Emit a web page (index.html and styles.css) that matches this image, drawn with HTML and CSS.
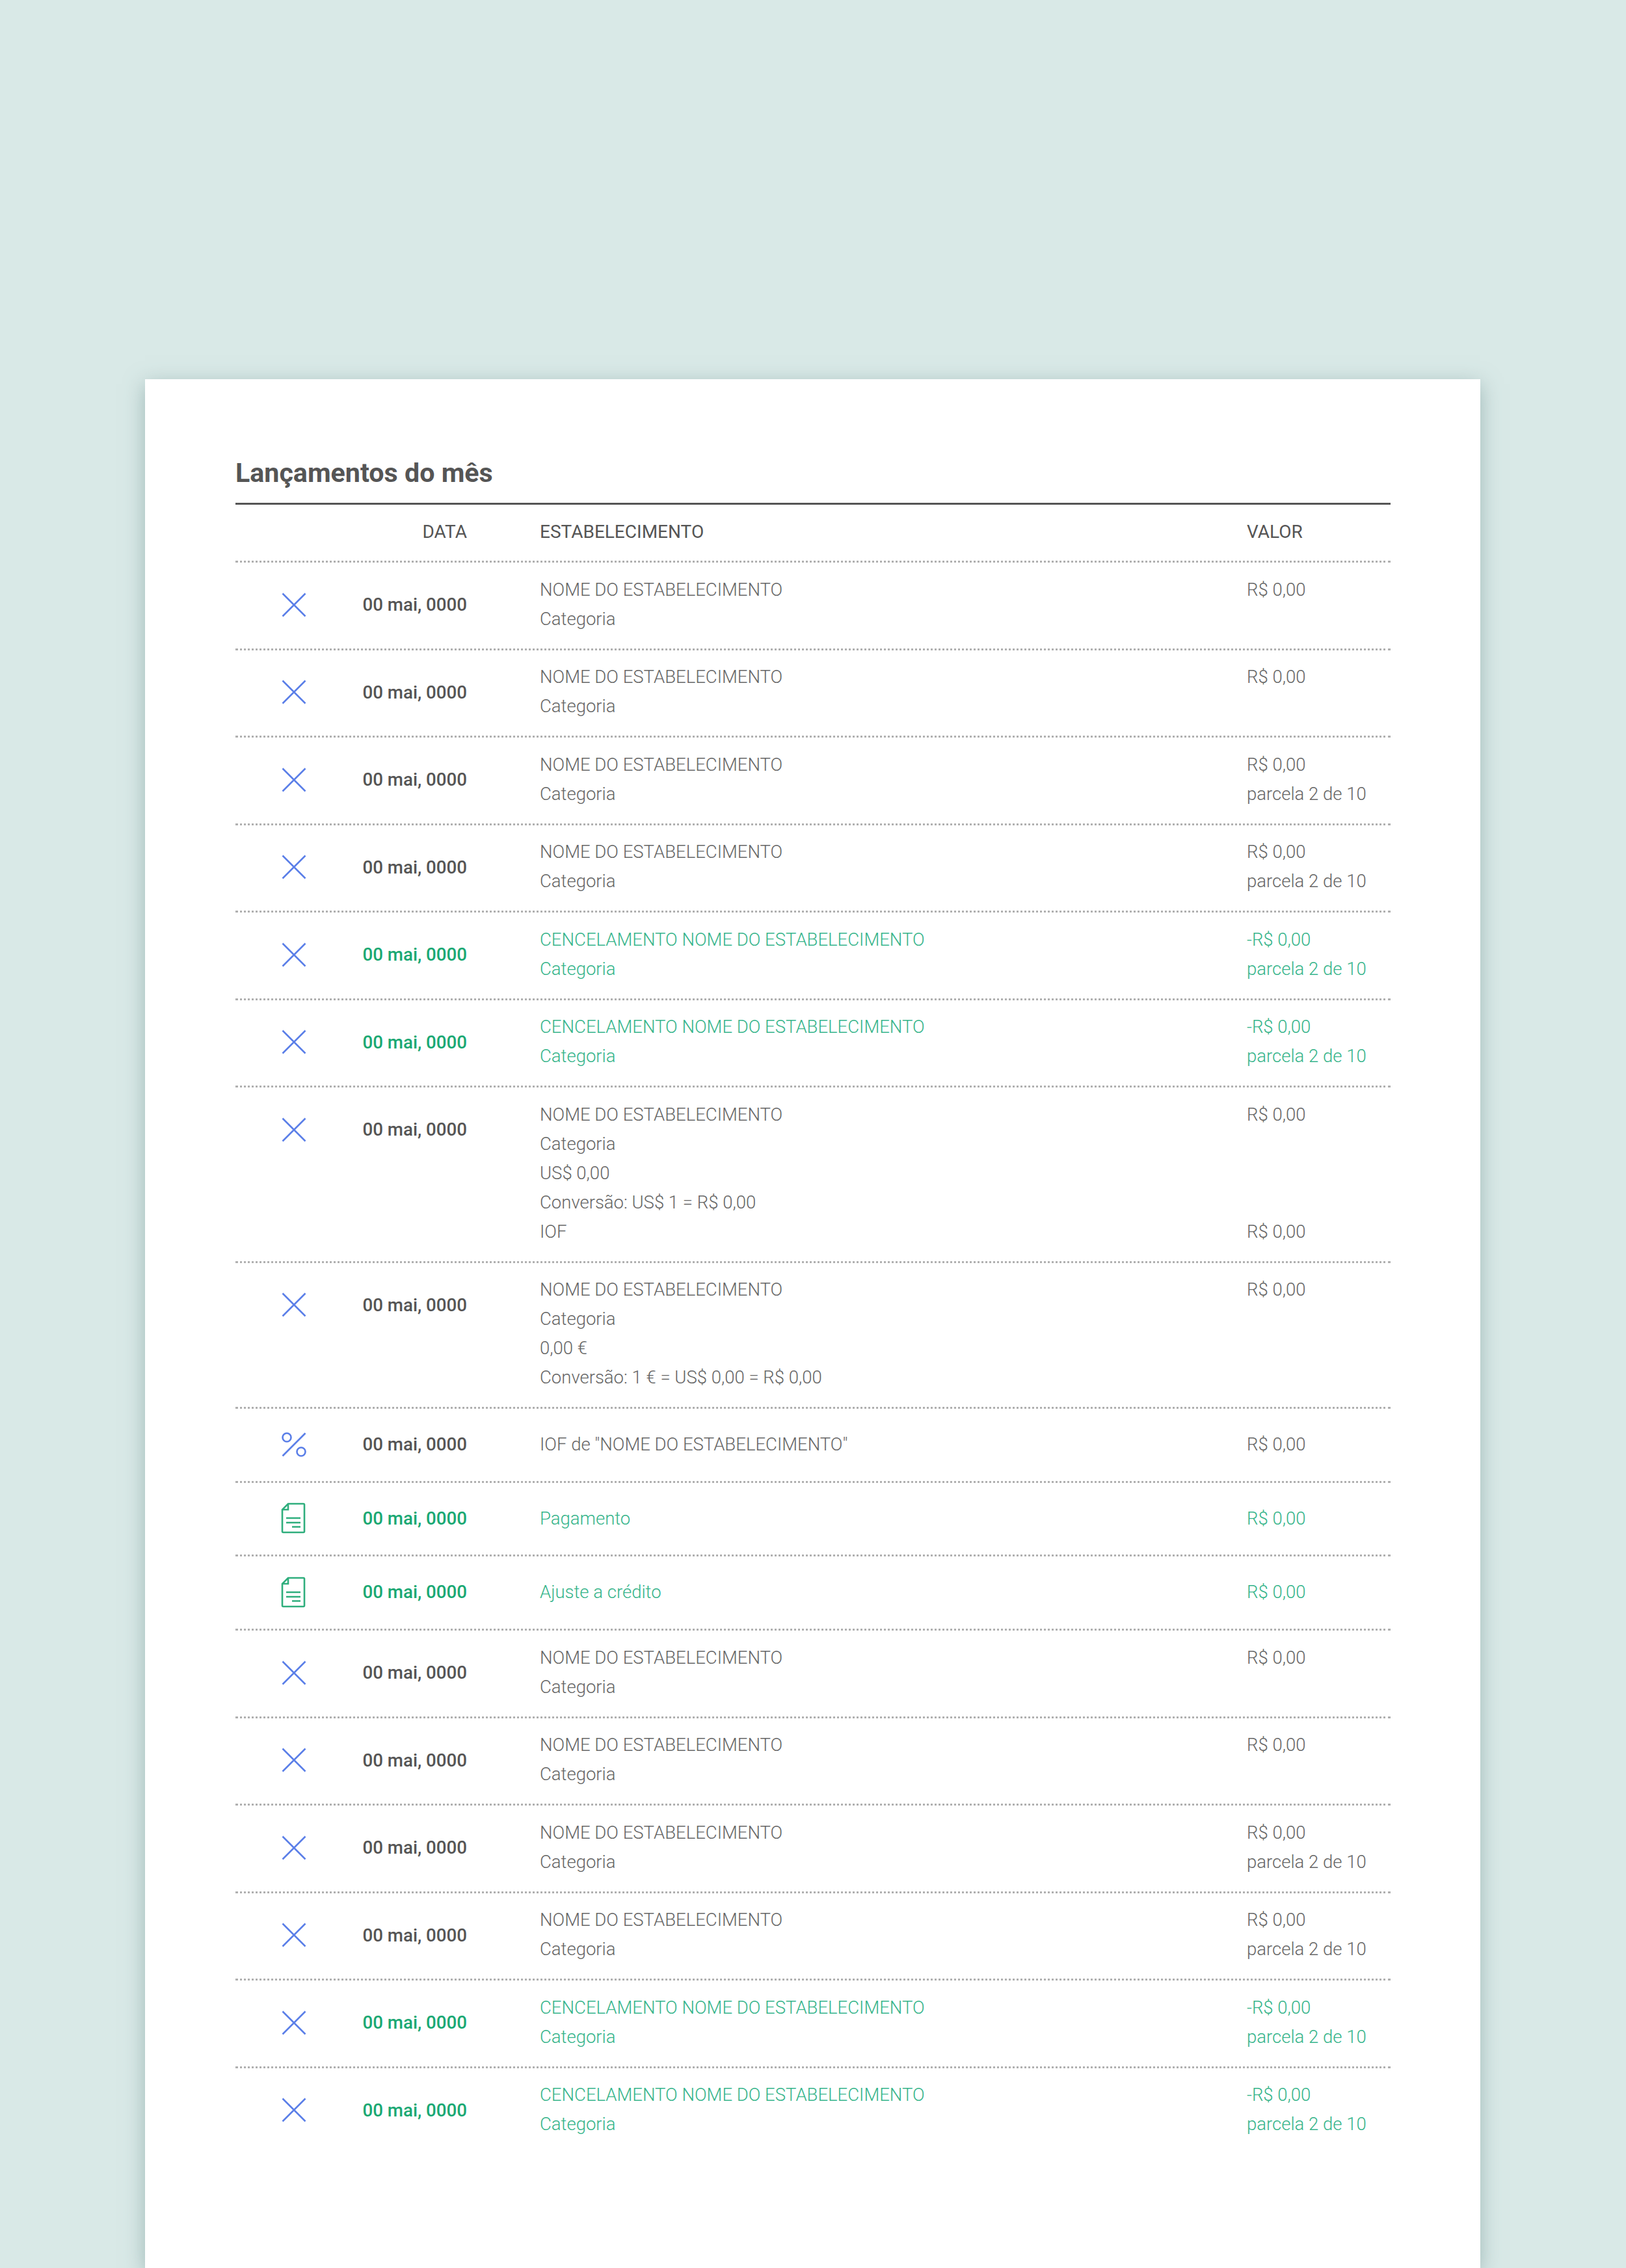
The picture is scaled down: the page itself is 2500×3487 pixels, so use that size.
FILE: index.html
```html
<!DOCTYPE html>
<html lang="pt-BR">
<head>
<meta charset="utf-8">
<title>Lançamentos do mês</title>
<link rel="stylesheet" href="styles.css">
</head>
<body>
<svg class="defs" width="0" height="0" aria-hidden="true">
  <symbol id="i-x" viewBox="0 0 40 40"><path d="M2.500 2.500 37.500 37.500M37.500 2.500 2.500 37.500"/></symbol>
  <symbol id="i-pct" viewBox="0 0 40 40"><path d="M37.500 2.500 2.500 37.500"/><circle cx="9" cy="9" r="6.500"/><circle cx="31" cy="31" r="6.500"/></symbol>
  <symbol id="i-doc" viewBox="0 0 38 48"><path d="M11 2H34.500A1.500 1.500 0 0 1 36 3.500V44.500A1.500 1.500 0 0 1 34.500 46H3.500A1.500 1.500 0 0 1 2 44.500V11ZM11 2V11H2M8 24H30M8 31H30M17 37.500H30"/></symbol>
</svg>
<main class="card">
  <h1 class="title">Lançamentos do mês</h1>
  <div class="head row-grid">
    <span></span><span class="h-date">DATA</span><span>ESTABELECIMENTO</span><span>VALOR</span>
  </div>

  <div class="row row-grid">
    <div class="side"><svg class="ico"><use href="#i-x"/></svg></div>
    <div class="side date">00 mai, 0000</div>
    <div class="cell"><p>NOME DO ESTABELECIMENTO</p><p>Categoria</p></div>
    <div class="cell"><p>R$ 0,00</p></div>
  </div>
  <div class="row row-grid">
    <div class="side"><svg class="ico"><use href="#i-x"/></svg></div>
    <div class="side date">00 mai, 0000</div>
    <div class="cell"><p>NOME DO ESTABELECIMENTO</p><p>Categoria</p></div>
    <div class="cell"><p>R$ 0,00</p></div>
  </div>
  <div class="row row-grid">
    <div class="side"><svg class="ico"><use href="#i-x"/></svg></div>
    <div class="side date">00 mai, 0000</div>
    <div class="cell"><p>NOME DO ESTABELECIMENTO</p><p>Categoria</p></div>
    <div class="cell"><p>R$ 0,00</p><p>parcela 2 de 10</p></div>
  </div>
  <div class="row row-grid">
    <div class="side"><svg class="ico"><use href="#i-x"/></svg></div>
    <div class="side date">00 mai, 0000</div>
    <div class="cell"><p>NOME DO ESTABELECIMENTO</p><p>Categoria</p></div>
    <div class="cell"><p>R$ 0,00</p><p>parcela 2 de 10</p></div>
  </div>
  <div class="row row-grid green">
    <div class="side"><svg class="ico blue"><use href="#i-x"/></svg></div>
    <div class="side date">00 mai, 0000</div>
    <div class="cell"><p>CENCELAMENTO NOME DO ESTABELECIMENTO</p><p>Categoria</p></div>
    <div class="cell"><p>-R$ 0,00</p><p>parcela 2 de 10</p></div>
  </div>
  <div class="row row-grid green">
    <div class="side"><svg class="ico blue"><use href="#i-x"/></svg></div>
    <div class="side date">00 mai, 0000</div>
    <div class="cell"><p>CENCELAMENTO NOME DO ESTABELECIMENTO</p><p>Categoria</p></div>
    <div class="cell"><p>-R$ 0,00</p><p>parcela 2 de 10</p></div>
  </div>
  <div class="row row-grid">
    <div class="side"><svg class="ico"><use href="#i-x"/></svg></div>
    <div class="side date">00 mai, 0000</div>
    <div class="cell"><p>NOME DO ESTABELECIMENTO</p><p>Categoria</p><p>US$ 0,00</p><p>Conversão: US$ 1 = R$ 0,00</p><p>IOF</p></div>
    <div class="cell spread"><p>R$ 0,00</p><p>R$ 0,00</p></div>
  </div>
  <div class="row row-grid">
    <div class="side"><svg class="ico"><use href="#i-x"/></svg></div>
    <div class="side date">00 mai, 0000</div>
    <div class="cell"><p>NOME DO ESTABELECIMENTO</p><p>Categoria</p><p>0,00 €</p><p>Conversão: 1 € = US$ 0,00 = R$ 0,00</p></div>
    <div class="cell"><p>R$ 0,00</p></div>
  </div>
  <div class="row row-grid single">
    <div class="side"><svg class="ico"><use href="#i-pct"/></svg></div>
    <div class="side date">00 mai, 0000</div>
    <div class="cell"><p>IOF de "NOME DO ESTABELECIMENTO"</p></div>
    <div class="cell"><p>R$ 0,00</p></div>
  </div>
  <div class="row row-grid single green">
    <div class="side"><svg class="ico doc"><use href="#i-doc"/></svg></div>
    <div class="side date">00 mai, 0000</div>
    <div class="cell"><p>Pagamento</p></div>
    <div class="cell"><p>R$ 0,00</p></div>
  </div>
  <div class="row row-grid single green">
    <div class="side"><svg class="ico doc"><use href="#i-doc"/></svg></div>
    <div class="side date">00 mai, 0000</div>
    <div class="cell"><p>Ajuste a crédito</p></div>
    <div class="cell"><p>R$ 0,00</p></div>
  </div>
  <div class="row row-grid">
    <div class="side"><svg class="ico"><use href="#i-x"/></svg></div>
    <div class="side date">00 mai, 0000</div>
    <div class="cell"><p>NOME DO ESTABELECIMENTO</p><p>Categoria</p></div>
    <div class="cell"><p>R$ 0,00</p></div>
  </div>
  <div class="row row-grid">
    <div class="side"><svg class="ico"><use href="#i-x"/></svg></div>
    <div class="side date">00 mai, 0000</div>
    <div class="cell"><p>NOME DO ESTABELECIMENTO</p><p>Categoria</p></div>
    <div class="cell"><p>R$ 0,00</p></div>
  </div>
  <div class="row row-grid">
    <div class="side"><svg class="ico"><use href="#i-x"/></svg></div>
    <div class="side date">00 mai, 0000</div>
    <div class="cell"><p>NOME DO ESTABELECIMENTO</p><p>Categoria</p></div>
    <div class="cell"><p>R$ 0,00</p><p>parcela 2 de 10</p></div>
  </div>
  <div class="row row-grid">
    <div class="side"><svg class="ico"><use href="#i-x"/></svg></div>
    <div class="side date">00 mai, 0000</div>
    <div class="cell"><p>NOME DO ESTABELECIMENTO</p><p>Categoria</p></div>
    <div class="cell"><p>R$ 0,00</p><p>parcela 2 de 10</p></div>
  </div>
  <div class="row row-grid green">
    <div class="side"><svg class="ico blue"><use href="#i-x"/></svg></div>
    <div class="side date">00 mai, 0000</div>
    <div class="cell"><p>CENCELAMENTO NOME DO ESTABELECIMENTO</p><p>Categoria</p></div>
    <div class="cell"><p>-R$ 0,00</p><p>parcela 2 de 10</p></div>
  </div>
  <div class="row row-grid green last">
    <div class="side"><svg class="ico blue"><use href="#i-x"/></svg></div>
    <div class="side date">00 mai, 0000</div>
    <div class="cell"><p>CENCELAMENTO NOME DO ESTABELECIMENTO</p><p>Categoria</p></div>
    <div class="cell"><p>-R$ 0,00</p><p>parcela 2 de 10</p></div>
  </div>
</main>
</body>
</html>
```
FILE: styles.css
```css
html, body { margin: 0; padding: 0; }
body {
  height: 3487px;
  overflow: hidden;
  background: #d9e9e7;
  font-family: Roboto, "Liberation Sans", sans-serif;
  padding-top: 583px;
  box-sizing: border-box;
}
.defs { position: absolute; }
.card {
  width: 2053px;
  height: 2904px;
  margin-left: 223px;
  box-sizing: border-box;
  padding: 115px 138px 0 139px;
  background: #fff;
  box-shadow: 0 8px 30px rgba(100, 135, 135, .5);
}
.title {
  margin: 0;
  font-size: 41.2px;
  line-height: 58px;
  font-weight: 700;
  color: #555;
  padding-bottom: 17px;
  border-bottom: 3px solid #555;
}
.row-grid {
  display: grid;
  grid-template-columns: 196px 272px 1087px 1fr;
}
.head {
  font-size: 28px;
  line-height: 45px;
  font-weight: 400;
  color: #555;
  padding: 19px 0 22px;
  border-bottom: 3px dotted #b0b0b0;
}
.h-date { text-align: right; padding-right: 112px; }
.row {
  padding: 18.5px 0 21px;
  border-bottom: 3px dotted #b0b0b0;
  font-size: 27.5px;
  line-height: 45px;
  font-weight: 300;
  color: #666;
}
.row.single { padding: 32px 0 31.7px; }
.row.last { border-bottom: 0; }
.cell { padding-bottom: 2px; }
.cell p { margin: 0; }
.spread { display: flex; flex-direction: column; justify-content: space-between; }
.side { height: 92px; display: flex; align-items: center; }
.single .side { height: 45px; }
.date {
  font-size: 27.7px;
  font-weight: 500;
  color: #555;
  justify-content: flex-end;
  padding-right: 112px;
  white-space: nowrap;
}
.green { color: #35b48a; }
.green .date { color: #1aa873; }
.ico {
  width: 40px;
  height: 40px;
  margin-left: 70px;
  overflow: visible;
  fill: none;
  stroke: #5b7fe8;
  stroke-width: 2.6;
}
.ico.doc { width: 38px; height: 48px; stroke: #2fae7d; stroke-width: 2.6; }
```
